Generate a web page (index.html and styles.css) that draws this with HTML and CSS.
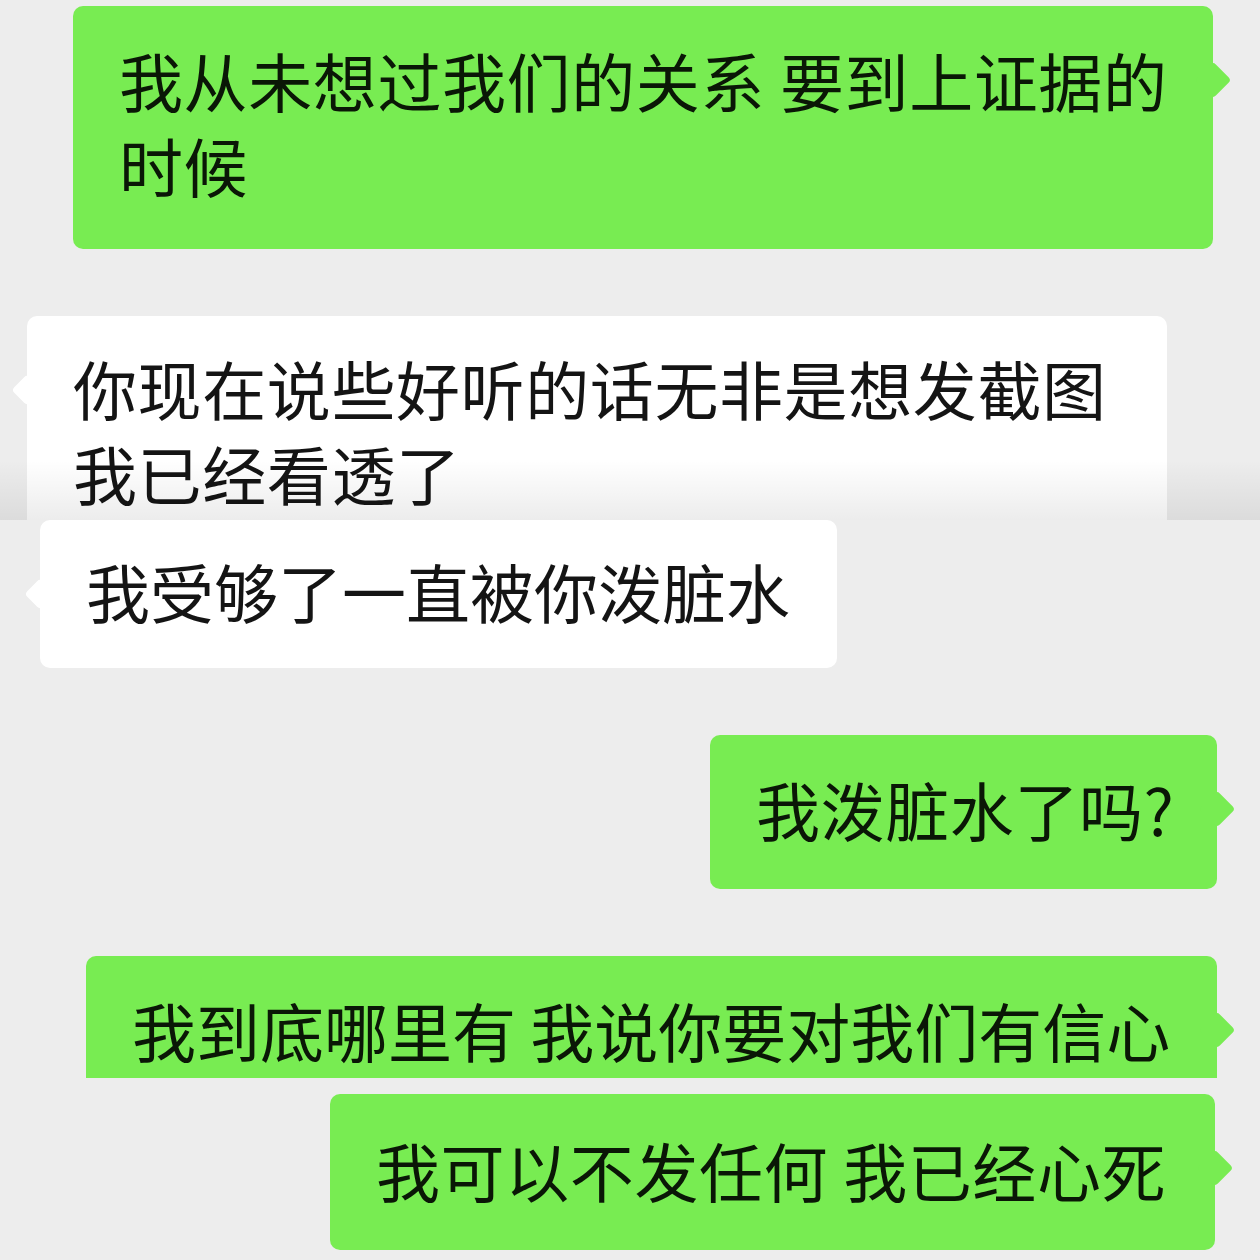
FILE: index.html
```html
<!DOCTYPE html>
<html lang="zh-CN">
<head>
<meta charset="UTF-8">
<meta name="viewport" content="width=device-width, initial-scale=1.0">
<title>聊天记录</title>
<link rel="stylesheet" href="styles.css">
</head>
<body>

  <div class="strip strip--a">
    <div class="bubble bubble--me b1">我从未想过我们的关系 要到上证据的<br>时候</div>
    <div class="bubble bubble--them b2">你现在说些好听的话无非是想发截图<br>我已经看透了</div>
  </div>

  <div class="strip strip--b">
    <div class="bubble bubble--them b3">我受够了一直被你泼脏水</div>
    <div class="bubble bubble--me b4">我泼脏水了吗?</div>
    <div class="bubble bubble--me b5">我到底哪里有 我说你要对我们有信心</div>
  </div>

  <div class="strip strip--c">
    <div class="bubble bubble--me b6">我可以不发任何 我已经心死</div>
  </div>

</body>
</html>
```

FILE: styles.css
```css
body {
  margin: 0;
  padding: 0;
  background-color: #ededed;
  font-family: "Noto Sans CJK SC", "Noto Sans", sans-serif;
}

/* each strip is one cut-out piece of the chat */
.strip {
  display: flex;
  flex-direction: column;
  align-items: flex-start;
  gap: 67px;
  overflow: hidden;
  position: relative;
  box-sizing: border-box;
}

.strip--a {
  height: 520px;
  padding-top: 6px;
}

.strip--a::after {
  content: "";
  position: absolute;
  left: 0;
  right: 0;
  bottom: 0;
  height: 60px;
  background: linear-gradient(to bottom, rgba(0, 0, 0, 0), rgba(0, 0, 0, 0.075));
}

.strip--b {
  height: 558px;
}

.strip--c {
  height: 182px;
  padding-top: 16px;
}

.bubble {
  position: relative;
  flex-shrink: 0;
  box-sizing: border-box;
  padding: 30px 46px 0 46px;
  border-radius: 10px;
  font-size: 64px;
  line-height: 85px;
  letter-spacing: 0.6px;
  white-space: nowrap;
}

.bubble--me {
  background-color: #78ec52;
  color: #0a1706;
}

.bubble--them {
  background-color: #ffffff;
  color: #141414;
}

/* the little arrow */
.bubble::after {
  content: "";
  position: absolute;
  top: 61px;
  width: 26px;
  height: 26px;
  border-radius: 4px;
  transform: rotate(45deg);
}

.bubble--me::after {
  right: -13px;
  background-color: #78ec52;
}

.bubble--them::after {
  left: -11px;
  width: 22px;
  height: 22px;
  top: 63px;
  background-color: #ffffff;
}

.b1 {
  margin-left: 73px;
  width: 1140px;
  height: 243px;
  padding-top: 31px;
}

.b2 {
  margin-left: 27px;
  width: 1140px;
  height: 240px;
  padding-top: 29px;
}

.b3 {
  margin-left: 40px;
  width: 797px;
  height: 148px;
  padding-top: 28px;
  letter-spacing: 0;
}

.b4 {
  margin-left: 710px;
  width: 507px;
  height: 154px;
  padding-top: 31px;
}

.b5 {
  margin-left: 86px;
  width: 1131px;
  height: 160px;
  padding-top: 31px;
  letter-spacing: 0;
}

.b6 {
  margin-left: 330px;
  width: 885px;
  height: 156px;
  padding-top: 33px;
}
```
